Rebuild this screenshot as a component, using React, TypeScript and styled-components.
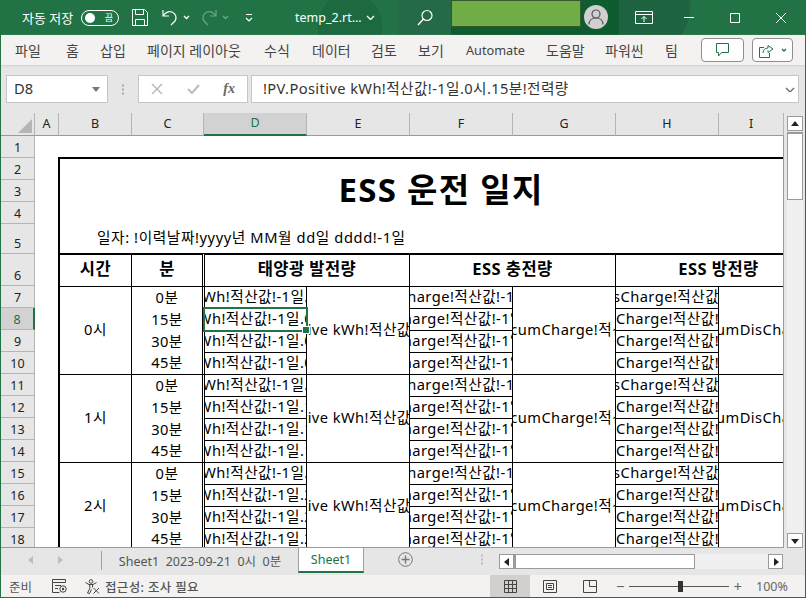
import { FC, ReactNode } from "react";
import styled, { createGlobalStyle } from "styled-components";

const GREEN = "#217346";
const FONT = `"Noto Sans", "Noto Sans CJK KR", sans-serif`;

const Global = createGlobalStyle`
  html, body { margin: 0; padding: 0; background: #e6e6e6; }
  * { box-sizing: border-box; }
`;

const Window = styled.div`
  width: 806px;
  height: 598px;
  display: flex;
  flex-direction: column;
  overflow: hidden;
  font-family: ${FONT};
  border-left: 1px solid ${GREEN};
  border-right: 1px solid ${GREEN};
  border-bottom: 1px solid ${GREEN};
`;

/* title bar */
const TitleBar = styled.div`
  height: 35px;
  flex: none;
  margin: 0 -1px;
  display: flex;
  align-items: center;
  color: #fff;
  font-size: 13px;
  background:
    radial-gradient(circle at 350px 26px, #1d6a40 0 32px, transparent 33px),
    radial-gradient(circle at 640px 6px, #1f6341 0 50px, transparent 51px),
    ${GREEN};
`;

const AutoSave = styled.span`
  margin-left: 22px;
  width: 59px;
  white-space: nowrap;
`;

const Toggle = styled.div`
  width: 38px;
  height: 16px;
  border: 1px solid #fff;
  border-radius: 8px;
  display: flex;
  align-items: center;
  justify-content: space-between;
  padding: 0 5px 0 3px;
  font-size: 9px;
  line-height: 1;
`;

const Knob = styled.i`
  width: 10px;
  height: 10px;
  border-radius: 50%;
  background: #fff;
`;

const QuickIcon = styled.div<{ $left: number; $dim?: boolean }>`
  margin-left: ${({ $left }) => $left}px;
  display: flex;
  opacity: ${({ $dim }) => ($dim ? 0.35 : 1)};
`;

const FileName = styled.div`
  margin-left: 42px;
  width: 108px;
  display: flex;
  align-items: center;
  gap: 4px;
  font-size: 12.5px;
  white-space: nowrap;
`;

const SearchZone = styled.div`
  width: 53px;
  height: 100%;
  background: #246a47;
  display: flex;
  align-items: center;
  justify-content: center;
  margin-left: -5px;
`;

const AccountZone = styled.div`
  width: 168px;
  height: 100%;
  background: #0f5c30;
  display: flex;
  align-items: flex-start;
`;

const RedactedBox = styled.div`
  width: 130px;
  height: 27px;
  background: #70ad47;
  border: 1px solid #33592c;
`;

const Avatar = styled.div`
  width: 24px;
  height: 24px;
  margin: 5px 0 0 3px;
  border-radius: 50%;
  background: #d0d0d0;
  display: flex;
  align-items: center;
  justify-content: center;
`;

const WindowIcons = styled.div`
  flex: 1;
  height: 100%;
  display: flex;
  align-items: center;
  padding-left: 16px;
`;

const WinBtn = styled.div<{ $left: number }>`
  margin-left: ${({ $left }) => $left}px;
  display: flex;
`;

/* ribbon tabs */
const Ribbon = styled.div`
  height: 30px;
  flex: none;
  background: #f3f2f1;
  display: flex;
  align-items: center;
  padding: 0 12px 0 14px;
  font-size: 14px;
  color: #444;
  box-shadow: 0 1px 2px #cfcfcf;
  position: relative;
`;

const RibbonTab = styled.span<{ $w: number; $latin?: boolean }>`
  width: ${({ $w }) => $w}px;
  flex: none;
  white-space: nowrap;
  font-size: ${({ $latin }) => ($latin ? "12.7px" : "14px")};
`;

const RibbonBtn = styled.div<{ $w: number }>`
  width: ${({ $w }) => $w}px;
  height: 24px;
  background: #fff;
  border: 1px solid #8f8f8f;
  border-radius: 4px;
  display: flex;
  align-items: center;
  justify-content: center;
  gap: 7px;
`;

const RibbonRight = styled.div`
  margin-left: auto;
  display: flex;
  gap: 8px;
`;

/* formula bar */
const FormulaBar = styled.div`
  height: 48px;
  flex: none;
  background: #e6e6e6;
  display: flex;
  align-items: center;
  padding: 0 6px 0 5px;
`;

const FieldBox = styled.div<{ $w?: number }>`
  height: 28px;
  width: ${({ $w }) => ($w ? `${$w}px` : "auto")};
  flex: ${({ $w }) => ($w ? "none" : "1")};
  background: #fff;
  border: 1px solid #c6c6c6;
  display: flex;
  align-items: center;
  font-size: 14.67px;
  line-height: 18px;
  color: #333;
  white-space: nowrap;
`;

const NameText = styled.span`
  flex: 1;
  padding: 0 0 3px 7px;
`;

const Grip = styled.div`
  width: 30px;
  display: flex;
  justify-content: center;
`;

const FxButtons = styled.div`
  display: flex;
  align-items: center;
  justify-content: space-between;
  width: 100%;
  padding: 0 12px;
`;

const Fx = styled.span`
  font-family: "Liberation Serif", serif;
  font-style: italic;
  font-weight: bold;
  font-size: 14px;
  color: #666;
`;

const FormulaText = styled.span`
  flex: 1;
  padding: 0 0 3px 11px;
  letter-spacing: 0.4px;
`;

/* sheet */
const SheetRow = styled.div`
  flex: 1;
  min-height: 0;
  display: flex;
  background: #e6e6e6;
`;

const SheetPane = styled.div`
  width: 783px;
  display: flex;
  flex-direction: column;
  border-bottom: 1px solid #9a9a9a;
`;

const ColHeads = styled.div`
  height: 23px;
  flex: none;
  display: flex;
`;

const Corner = styled.div`
  width: 34px;
  border-right: 1px solid #b5b5b5;
  border-bottom: 1px solid #9a9a9a;
  display: flex;
  align-items: flex-end;
  justify-content: flex-end;
  padding: 0 2px 2px 0;
`;

const ColHead = styled.div<{ $w?: number; $on?: boolean }>`
  width: ${({ $w }) => ($w ? `${$w}px` : "auto")};
  flex: ${({ $w }) => ($w ? "none" : "1")};
  display: flex;
  align-items: center;
  justify-content: center;
  padding-bottom: 2px;
  font-size: 12.5px;
  color: ${({ $on }) => ($on ? GREEN : "#222")};
  background: ${({ $on }) => ($on ? "#d2d2d2" : "transparent")};
  border-right: 1px solid #b5b5b5;
  border-bottom: ${({ $on }) => ($on ? `2px solid ${GREEN}` : "1px solid #9a9a9a")};
`;

const SheetBody = styled.div`
  flex: 1;
  min-height: 0;
  display: flex;
`;

const RowHeads = styled.div`
  width: 34px;
  flex: none;
  overflow: hidden;
`;

const RowHead = styled.div<{ $h: number; $on?: boolean }>`
  height: ${({ $h }) => $h}px;
  display: flex;
  align-items: flex-end;
  justify-content: center;
  font-size: 12.5px;
  line-height: 19px;
  color: ${({ $on }) => ($on ? GREEN : "#222")};
  background: ${({ $on }) => ($on ? "#d2d2d2" : "transparent")};
  border-bottom: 1px solid #b5b5b5;
  border-right: ${({ $on }) => ($on ? `2px solid ${GREEN}` : "1px solid #b5b5b5")};
`;

const Canvas = styled.div`
  flex: 1;
  min-width: 0;
  overflow: hidden;
  background: #fff;
  border-right: 1px solid #9a9a9a;
`;

const Grid = styled.div`
  position: relative;
  display: grid;
  width: 787px;
  grid-template-columns: 23px 74px 73px 102px 103px 103px 103px 103px 103px;
  grid-template-rows: 21px 22px 22px 23px 29px 34px repeat(12, 22px);
  color: #000;
  font-size: 14.67px;
  line-height: 18px;
  letter-spacing: 0.45px;
`;

type Edge = { $left?: string; $right?: string; $top?: string; $bottom?: string };

const Cell = styled.div<{ $area: string; $weight?: boolean; $start?: boolean } & Edge>`
  grid-area: ${({ $area }) => $area};
  min-width: 0;
  display: flex;
  align-items: center;
  justify-content: ${({ $start }) => ($start ? "flex-start" : "center")};
  overflow: hidden;
  white-space: nowrap;
  padding-bottom: 3px;
  font-size: ${({ $weight }) => ($weight ? "16.5px" : "inherit")};
  font-weight: ${({ $weight }) => ($weight ? 700 : 400)};
  border-left: ${({ $left }) => $left ?? "0"};
  border-right: ${({ $right }) => $right ?? "0"};
  border-top: ${({ $top }) => $top ?? "0"};
  border-bottom: ${({ $bottom }) => $bottom ?? "0"};
`;

const CellText = styled.span`
  flex: none;
`;

const TitleText = styled.span`
  font-size: 33px;
  line-height: 40px;
  font-weight: 700;
  letter-spacing: 1.3px;
`;

const DateText = styled.span`
  padding: 0 0 0 37px;
  letter-spacing: 0.6px;
`;

const Selection = styled.div`
  position: absolute;
  grid-area: 8 / 4 / 9 / 5;
  top: -2px;
  left: -2px;
  right: -1px;
  bottom: -1px;
  border: 2px solid ${GREEN};
`;

const Handle = styled.i`
  position: absolute;
  right: -3px;
  bottom: -3px;
  width: 6px;
  height: 6px;
  background: ${GREEN};
  outline: 1px solid #fff;
`;

/* vertical scrollbar */
const VScroll = styled.div`
  flex: 1;
  display: flex;
  flex-direction: column;
  padding: 3px 2px 0 3px;
`;

const ScrollBtn = styled.div<{ $w?: number }>`
  width: ${({ $w }) => ($w ? `${$w}px` : "auto")};
  height: 15px;
  flex: none;
  background: #fff;
  border: 1px solid #9a9a9a;
  display: flex;
  align-items: center;
  justify-content: center;
`;

const VThumb = styled.div`
  height: 68px;
  flex: none;
  margin-top: 1px;
  background: #fff;
  border: 1px solid #9a9a9a;
  border-top-width: 2px;
`;

const VTrack = styled.div`
  flex: 1;
  background: #f0f0f0;
`;

/* tabs */
const TabRow = styled.div`
  height: 27px;
  flex: none;
  background: #e6e6e6;
  display: flex;
  align-items: flex-start;
  font-size: 12.5px;
  color: #555;
`;

const TabArrows = styled.div`
  width: 100px;
  height: 24px;
  display: flex;
  align-items: center;
  gap: 21px;
  padding-left: 26px;
`;

const TabSep = styled.i`
  width: 1px;
  height: 19px;
  margin-top: 3px;
  background: #a0a0a0;
`;

const SheetTab = styled.div<{ $on?: boolean }>`
  height: 25px;
  display: flex;
  align-items: center;
  justify-content: center;
  padding-bottom: 1px;
  white-space: nowrap;
  width: ${({ $on }) => ($on ? "66px" : "196px")};
  color: ${({ $on }) => ($on ? GREEN : "#555")};
  background: ${({ $on }) => ($on ? "#fff" : "transparent")};
  border-left: ${({ $on }) => ($on ? "1px solid #a0a0a0" : "0")};
  border-right: ${({ $on }) => ($on ? "1px solid #a0a0a0" : "0")};
  border-bottom: ${({ $on }) => ($on ? `2px solid ${GREEN}` : "0")};
`;

const AddSheet = styled.div`
  margin: 4px 0 0 34px;
  display: flex;
`;

const TabGrip = styled.div`
  margin: 6px 0 0 68px;
  display: flex;
`;

const HScroll = styled.div`
  margin: 6px 0 0 15px;
  width: 284px;
  height: 15px;
  display: flex;
  background: #f0f0f0;
`;

const HThumb = styled.div`
  width: 181px;
  background: #fff;
  border: 1px solid #9a9a9a;
  border-left-width: 2px;
`;

const HGap = styled.div`
  flex: 1;
`;

/* status bar */
const StatusBar = styled.div`
  height: 22px;
  flex: none;
  background: #f3f2f1;
  display: flex;
  align-items: center;
  font-size: 12.5px;
  color: #555;
  padding-left: 8px;
`;

const StatusLabel = styled.span<{ $w: number; $strong?: boolean }>`
  width: ${({ $w }) => $w}px;
  white-space: nowrap;
  letter-spacing: ${({ $strong }) => ($strong ? "0.35px" : "0")};
  font-weight: ${({ $strong }) => ($strong ? 500 : 400)};
`;

const StatusIcon = styled.div<{ $left: number }>`
  margin-left: ${({ $left }) => $left}px;
  display: flex;
`;

const ViewBtn = styled.div<{ $on?: boolean }>`
  width: 40px;
  height: 100%;
  display: flex;
  align-items: center;
  justify-content: center;
  background: ${({ $on }) => ($on ? "#d2d0ce" : "transparent")};
`;

const ViewGroup = styled.div<{ $left: number }>`
  margin-left: ${({ $left }) => $left}px;
  height: 100%;
  display: flex;
`;

const ZoomBar = styled.div`
  margin-left: 6px;
  display: flex;
  align-items: center;
  width: 126px;
  gap: 4px;
  font-size: 15px;
  color: #666;
`;

const SliderLine = styled.div`
  flex: 1;
  height: 1px;
  background: #555;
  position: relative;
`;

const SliderKnob = styled.i`
  position: absolute;
  left: 49px;
  top: -5px;
  width: 5px;
  height: 11px;
  background: #333;
`;

const ZoomPct = styled.span`
  margin-left: 14px;
  font-size: 12.5px;
  color: #666;
`;

/* icons */
const I: FC<{ w: number; h: number; children: ReactNode }> = ({ w, h, children }) => (
  <svg width={w} height={h} viewBox={`0 0 ${w} ${h}`} fill="none">
    {children}
  </svg>
);

const Caret: FC<{ color?: string; w?: number }> = ({ color = "#fff", w = 7 }) => (
  <I w={w} h={5}>
    <path d={`M1 1l${w / 2 - 1} ${w / 2 - 1}L${w - 1} 1`} stroke={color} strokeWidth="1.3" />
  </I>
);

const SaveIcon = () => (
  <I w={16} h={17}>
    <path d="M.5.5h12l3 3v13H.5z M3.5.5v5h8v-5 M3.5 16.500v-6h9v6" stroke="#fff" />
  </I>
);

const UndoIcon = () => (
  <I w={16} h={17}>
    <path d="M1 1v6h6 M1.500 6.500C4 3 7 2 10 3c4 1.500 5 6 3 9l-4 4" stroke="#fff" strokeWidth="1.2" />
  </I>
);

const RedoIcon = () => (
  <I w={16} h={17}>
    <path d="M15 1v6H9 M14.500 6.500C12 3 9 2 6 3 2 4.500 1 9 3 12l4 4" stroke="#fff" strokeWidth="1.2" />
  </I>
);

const CustomizeIcon = () => (
  <I w={8} h={8}>
    <path d="M1 .5h6 M1 4l3 3 3-3" stroke="#fff" strokeWidth="1.2" />
  </I>
);

const SearchIcon = () => (
  <I w={16} h={17}>
    <circle cx="10" cy="6.500" r="5" stroke="#fff" strokeWidth="1.2" />
    <path d="M6.500 10L1 16" stroke="#fff" strokeWidth="1.4" />
  </I>
);

const PersonIcon = () => (
  <I w={16} h={16}>
    <circle cx="8" cy="5" r="4" stroke="#555" strokeWidth="1.2" />
    <path d="M1 15.500c0-4 3-6.500 7-6.500s7 2.500 7 6.500" stroke="#555" strokeWidth="1.2" />
  </I>
);

const DisplayIcon = () => (
  <I w={18} h={13}>
    <path d="M.5.500h17v12H.5z M.5 3.500h17 M9 11V5.500 M6.500 8L9 5.500 11.500 8" stroke="#fff" />
  </I>
);

const CommentIcon = () => (
  <I w={14} h={14}>
    <path d="M.5.5h12v9H5.500L2.500 13V9.500h-2z" stroke={GREEN} />
  </I>
);

const ShareIcon = () => (
  <I w={15} h={15}>
    <path d="M5 4.500H.5v10h10V10 M4 10c0-3 2-5 5-5V2.500L14 6l-5 3.500V7.500" stroke={GREEN} />
  </I>
);

const CrossIcon = () => (
  <I w={12} h={12}>
    <path d="M1 1l10 10M11 1L1 11" stroke="#bcbcbc" strokeWidth="1.6" />
  </I>
);

const CheckIcon = () => (
  <I w={13} h={12}>
    <path d="M1 6l4 4 7-8" stroke="#bcbcbc" strokeWidth="2" />
  </I>
);

const Dots = ({ color = "#a9a9a9" }) => (
  <I w={3} h={11}>
    <path d="M0 .5h2v2H0z M0 4.500h2v2H0z M0 8.500h2v2H0z" fill={color} />
  </I>
);

const Triangle: FC<{ dir: "up" | "down" | "left" | "right"; color?: string }> = ({ dir, color = "#222" }) => {
  const d = {
    up: "M0 6L4 1l4 5z",
    down: "M0 2l4 5 4-5z",
    left: "M6 0v8L1 4z",
    right: "M2 0v8l5-4z",
  }[dir];
  return (
    <I w={8} h={8}>
      <path d={d} fill={color} />
    </I>
  );
};

const MacroIcon = () => (
  <I w={15} h={14}>
    <path d="M.5.500h13v3H.5z M.5 3.500v10h7 M3 6.500h6 M3 9.500h3" stroke="#444" />
    <circle cx="11" cy="10" r="3.200" stroke="#444" />
    <circle cx="11" cy="10" r="1.200" fill="#444" />
  </I>
);

const AccessIcon = () => (
  <I w={15} h={15}>
    <circle cx="6" cy="2.500" r="1.800" stroke="#444" />
    <path d="M.5 3.500l3.500 2h4l3.500-2M4.500 5.500l.5 3.500-2.500 5 2 .5 2-4M7.500 5.500v3" stroke="#444" />
    <path d="M8.500 9l5.500 5.500M14 9l-5.500 5.500" stroke="#444" />
  </I>
);

const GridIcon = () => (
  <I w={13} h={13}>
    <path d="M.5.500h12v12H.5z M4.500.5v12 M8.500.5v12 M.5 4.500h12 M.5 8.500h12" stroke="#444" />
  </I>
);

const PageIcon = () => (
  <I w={14} h={13}>
    <path d="M.5.500h13v12H.5z M3.500 3.500h7v6h-7z M5 5.500h4 M5 7.500h4" stroke="#444" />
  </I>
);

const BreakIcon = () => (
  <I w={14} h={13}>
    <path d="M.5.500h13v12H.5z M6.500.5v6 M6.500 6.500h7" stroke="#444" />
  </I>
);

const PlusCircle = () => (
  <I w={15} h={15}>
    <circle cx="7.500" cy="7.500" r="6.800" stroke="#777" />
    <path d="M3.500 7.500h8 M7.500 3.500v8" stroke="#777" strokeWidth="1.4" />
  </I>
);

const tabs = [
  { label: "파일", w: 51 },
  { label: "홈", w: 34 },
  { label: "삽입", w: 47 },
  { label: "페이지 레이아웃", w: 117 },
  { label: "수식", w: 48 },
  { label: "데이터", w: 59 },
  { label: "검토", w: 47 },
  { label: "보기", w: 48 },
  { label: "Automate", w: 80, latin: true },
  { label: "도움말", w: 59 },
  { label: "파워씬", w: 60 },
  { label: "팀", w: 20 },
];
const columns = [
  { label: "A", w: 24 },
  { label: "B", w: 73 },
  { label: "C", w: 72 },
  { label: "D", w: 103, on: true },
  { label: "E", w: 103 },
  { label: "F", w: 103 },
  { label: "G", w: 103 },
  { label: "H", w: 103 },
  { label: "I" },
];
const rowHeights = [22, 22, 22, 22, 30, 32, ...Array(12).fill(22)] as number[];
const hours = [0, 1, 2];
const minutes = [0, 15, 30, 45];
const LINE = "1px solid #000";
const THICK = "2px solid #000";
const DOUBLE = "3px double #000";

const HourBlock: FC<{ hour: number }> = ({ hour }) => {
  const top = 7 + hour * 4;
  const area = (row: number, rowEnd: number, col: number) => `${row} / ${col} / ${rowEnd} / ${col + 1}`;
  const mergedRow = (col: number, text: string) => (
    <Cell $area={area(top, top + 4, col)} $right={LINE} $bottom={LINE}>
      <CellText>{text}</CellText>
    </Cell>
  );
  const splitRows = (col: number, text: (m: number) => string) =>
    minutes.map((m, i) => (
      <Cell key={m} $area={area(top + i, top + i + 1, col)} $right={LINE} $bottom={LINE}>
        <CellText>{text(m)}</CellText>
      </Cell>
    ));
  return (
    <>
      <Cell $area={area(top, top + 4, 2)} $left={THICK} $right={LINE} $bottom={LINE}>
        {hour}시
      </Cell>
      {minutes.map((m, i) => (
        <Cell
          key={m}
          $area={area(top + i, top + i + 1, 3)}
          $right={DOUBLE}
          $bottom={i === 3 ? LINE : undefined}
        >
          {m}분
        </Cell>
      ))}
      {splitRows(4, (m) => `!PV.Positive kWh!적산값!-1일.${hour}시.${m}분!전력량`)}
      {mergedRow(5, `!PV.Meter.Positive kWh!적산값!-1일.${hour}시!전력량`)}
      {splitRows(6, (m) => `!ESS.Total.cumCharge!적산값!-1일.${hour}시.${m}분!전력량`)}
      {mergedRow(7, `!ESS.Battery.Sum.cumCharge!적산값!-1일.${hour}시!전력량`)}
      {splitRows(8, (m) => `!ESS.Status.cumDisCharge!적산값!-1일.${hour}시.${m}분!전력량`)}
      {mergedRow(9, `!ESS.Battery.Sums.cumDisCharge!적산값!-1일.${hour}시!전력량`)}
    </>
  );
};

export default function App() {
  return (
    <>
      <Global />
      <Window>
        <TitleBar>
          <AutoSave>자동 저장</AutoSave>
          <Toggle>
            <Knob />끔
          </Toggle>
          <QuickIcon $left={13}><SaveIcon /></QuickIcon>
          <QuickIcon $left={14}><UndoIcon /></QuickIcon>
          <QuickIcon $left={5}><Caret /></QuickIcon>
          <QuickIcon $left={11} $dim><RedoIcon /></QuickIcon>
          <QuickIcon $left={5} $dim><Caret /></QuickIcon>
          <QuickIcon $left={16}><CustomizeIcon /></QuickIcon>
          <FileName>
            temp_2.rt... <Caret w={9} />
          </FileName>
          <SearchZone><SearchIcon /></SearchZone>
          <AccountZone>
            <RedactedBox />
            <Avatar><PersonIcon /></Avatar>
          </AccountZone>
          <WindowIcons>
            <DisplayIcon />
            <WinBtn $left={31}>
              <I w={10} h={2}><path d="M0 .5h10" stroke="#fff" /></I>
            </WinBtn>
            <WinBtn $left={36}>
              <I w={10} h={10}><path d="M.5.500h9v9h-9z" stroke="#fff" /></I>
            </WinBtn>
            <WinBtn $left={36}>
              <I w={10} h={10}><path d="M0 0l10 10M10 0L0 10" stroke="#fff" /></I>
            </WinBtn>
          </WindowIcons>
        </TitleBar>

        <Ribbon>
          {tabs.map((t) => (
            <RibbonTab key={t.label} $w={t.w} $latin={t.latin}>{t.label}</RibbonTab>
          ))}
          <RibbonRight>
            <RibbonBtn $w={43}><CommentIcon /></RibbonBtn>
            <RibbonBtn $w={41}>
              <ShareIcon />
              <Caret color={GREEN} w={6} />
            </RibbonBtn>
          </RibbonRight>
        </Ribbon>

        <FormulaBar>
          <FieldBox $w={102}>
            <NameText>D8</NameText>
            <QuickIcon $left={0}><Triangle dir="down" color="#777" /></QuickIcon>
            <QuickIcon $left={7}><span /></QuickIcon>
          </FieldBox>
          <Grip><Dots /></Grip>
          <FieldBox $w={110}>
            <FxButtons>
              <CrossIcon />
              <CheckIcon />
              <Fx>fx</Fx>
            </FxButtons>
          </FieldBox>
          <QuickIcon $left={3}><span /></QuickIcon>
          <FieldBox>
            <FormulaText>!PV.Positive kWh!적산값!-1일.0시.15분!전력량</FormulaText>
            <Caret color="#666" w={10} />
            <QuickIcon $left={3}><span /></QuickIcon>
          </FieldBox>
        </FormulaBar>

        <SheetRow>
          <SheetPane>
            <ColHeads>
              <Corner>
                <I w={14} h={14}><path d="M14 0v14H0z" fill="#b5b5b5" /></I>
              </Corner>
              {columns.map((c) => (
                <ColHead key={c.label} $w={c.w} $on={c.on}>{c.label}</ColHead>
              ))}
            </ColHeads>
            <SheetBody>
              <RowHeads>
                {rowHeights.map((h, i) => (
                  <RowHead key={i} $h={h} $on={i === 7}>{i + 1}</RowHead>
                ))}
              </RowHeads>
              <Canvas>
                <Grid>
                  <Cell $area="2 / 2 / 5 / 10" $left={THICK} $top={THICK}>
                    <TitleText>ESS 운전 일지</TitleText>
                  </Cell>
                  <Cell $area="5 / 2 / 6 / 10" $left={THICK} $start>
                    <DateText>일자: !이력날짜!yyyy년 MM월 dd일 dddd!-1일</DateText>
                  </Cell>
                  <Cell $area="6 / 2 / 7 / 3" $weight $left={THICK} $top={THICK} $right={LINE} $bottom={LINE}>시간</Cell>
                  <Cell $area="6 / 3 / 7 / 4" $weight $top={THICK} $right={DOUBLE} $bottom={LINE}>분</Cell>
                  <Cell $area="6 / 4 / 7 / 6" $weight $top={THICK} $right={LINE} $bottom={LINE}>태양광 발전량</Cell>
                  <Cell $area="6 / 6 / 7 / 8" $weight $top={THICK} $right={LINE} $bottom={LINE}>ESS 충전량</Cell>
                  <Cell $area="6 / 8 / 7 / 10" $weight $top={THICK} $right={LINE} $bottom={LINE}>ESS 방전량</Cell>
                  {hours.map((h) => (
                    <HourBlock key={h} hour={h} />
                  ))}
                  <Selection>
                    <Handle />
                  </Selection>
                </Grid>
              </Canvas>
            </SheetBody>
          </SheetPane>
          <VScroll>
            <ScrollBtn><Triangle dir="up" /></ScrollBtn>
            <VThumb />
            <VTrack />
            <ScrollBtn><Triangle dir="down" /></ScrollBtn>
          </VScroll>
        </SheetRow>

        <TabRow>
          <TabArrows>
            <Triangle dir="left" color="#bdbdbd" />
            <Triangle dir="right" color="#bdbdbd" />
          </TabArrows>
          <TabSep />
          <SheetTab>Sheet1&nbsp; 2023-09-21&nbsp; 0시&nbsp; 0분</SheetTab>
          <SheetTab $on>Sheet1</SheetTab>
          <AddSheet><PlusCircle /></AddSheet>
          <TabGrip><Dots color="#bdbdbd" /></TabGrip>
          <HScroll>
            <ScrollBtn $w={15}><Triangle dir="left" /></ScrollBtn>
            <HThumb />
            <HGap />
            <ScrollBtn $w={15}><Triangle dir="right" /></ScrollBtn>
          </HScroll>
        </TabRow>

        <StatusBar>
          <StatusLabel $w={24}>준비</StatusLabel>
          <StatusIcon $left={19}><MacroIcon /></StatusIcon>
          <StatusIcon $left={18}><AccessIcon /></StatusIcon>
          <StatusIcon $left={5}>
            <StatusLabel $w={100} $strong>접근성: 조사 필요</StatusLabel>
          </StatusIcon>
          <ViewGroup $left={285}>
            <ViewBtn $on><GridIcon /></ViewBtn>
            <ViewBtn><PageIcon /></ViewBtn>
            <ViewBtn><BreakIcon /></ViewBtn>
          </ViewGroup>
          <ZoomBar>
            −
            <SliderLine><SliderKnob /></SliderLine>
            +
          </ZoomBar>
          <ZoomPct>100%</ZoomPct>
        </StatusBar>
      </Window>
    </>
  );
}
